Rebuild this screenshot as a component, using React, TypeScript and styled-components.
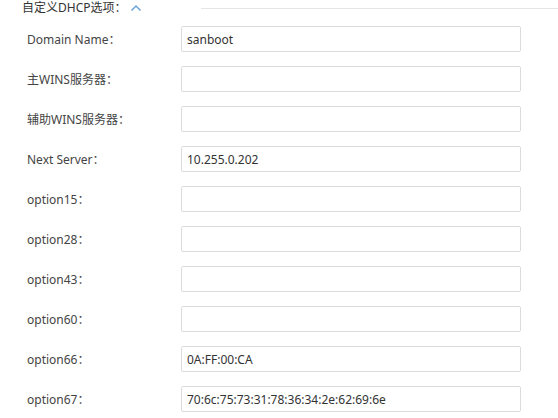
import React from "react";
import styled, { createGlobalStyle } from "styled-components";

const GlobalStyle = createGlobalStyle`
    body {
        margin: 0;
        background: #fff;
        font-family: "Noto Sans", "Noto Sans CJK SC", sans-serif;
        color: #333;
    }
`

const fields = [
    { label: "Domain Name：", value: "sanboot" },
    { label: "主WINS服务器：", value: "" },
    { label: "辅助WINS服务器：", value: "" },
    { label: "Next Server：", value: "10.255.0.202" },
    { label: "option15：", value: "" },
    { label: "option28：", value: "" },
    { label: "option43：", value: "" },
    { label: "option60：", value: "" },
    { label: "option66：", value: "0A:FF:00:CA" },
    { label: "option67：", value: "70:6c:75:73:31:78:36:34:2e:62:69:6e" },
]

export default function App() {
    return (
        <>
            <GlobalStyle />
            <Panel>
                <Header>
                    <Title>自定义DHCP选项：</Title>
                    <Toggle width="12" height="8" viewBox="0 0 12 8">
                        <path d="M1.5 6.5 L6 2 L10.5 6.5" fill="none" stroke="#6aa3d8" strokeWidth="1.5" />
                    </Toggle>
                    <Rule />
                </Header>
                <Form>
                    {fields.map((f) => (
                        <Row key={f.label}>
                            <Label>{f.label}</Label>
                            <Field defaultValue={f.value} />
                        </Row>
                    ))}
                </Form>
            </Panel>
        </>
    )
}

const Panel = styled.div`
    width: 558px;
    height: 418px;
    overflow: hidden;
`

const Header = styled.div`
    display: flex;
    align-items: center;
    height: 16px;
    padding-left: 22px;
`

const Title = styled.span`
    font-size: 12px;
    line-height: 16px;
    color: #333;
    white-space: nowrap;
`

const Toggle = styled.svg`
    flex-shrink: 0;
    margin-left: 3px;
    margin-top: -1px;
`

const Rule = styled.div`
    flex: 1;
    height: 1px;
    background: #e5e5e5;
    margin-left: 59px;
`

const Form = styled.form`
    display: flex;
    flex-direction: column;
    gap: 14px;
    margin-top: 10px;
    padding-left: 27px;
`

const Row = styled.div`
    display: grid;
    grid-template-columns: 154px 340px;
    align-items: center;
    height: 26px;
`

const Label = styled.label`
    font-size: 12px;
    color: #444;
    white-space: nowrap;
`

const Field = styled.input`
    box-sizing: border-box;
    width: 340px;
    height: 26px;
    border: 1px solid #dcdcdc;
    border-radius: 2px;
    padding: 0 5px;
    font-family: "Noto Sans", "Noto Sans CJK SC", sans-serif;
    font-size: 12px;
    color: #333;
    outline: none;
`
